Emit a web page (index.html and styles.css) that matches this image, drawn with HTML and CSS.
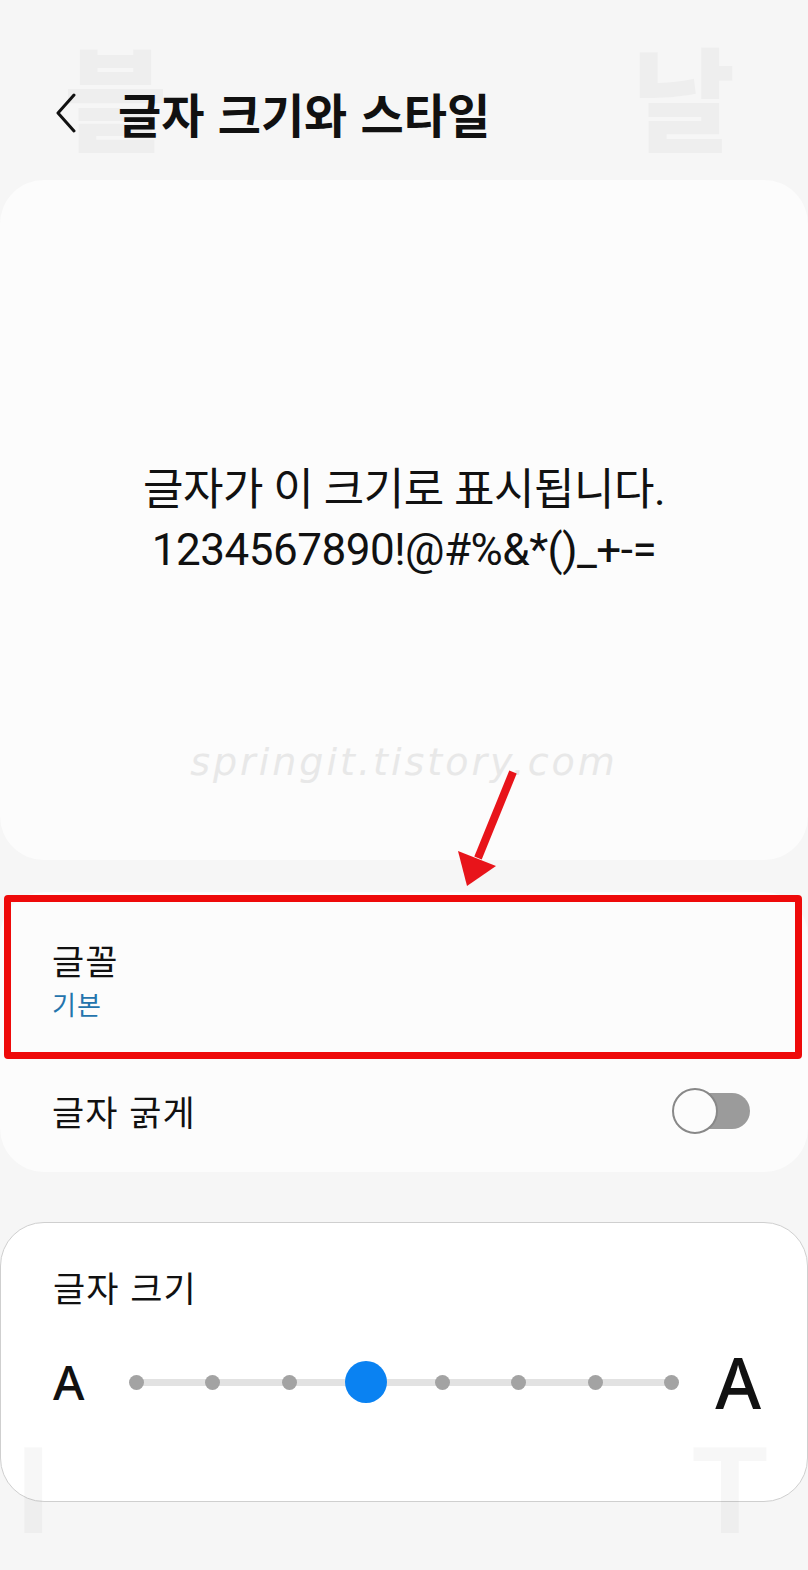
FILE: index.html
```html
<!DOCTYPE html>
<html lang="ko">
<head>
  <meta charset="UTF-8">
  <title>글자 크기와 스타일</title>
  <meta name="viewport" content="width=device-width, initial-scale=1">
  <link rel="stylesheet" href="styles.css">
</head>
<body>

<div class="ghost ghost-1">블</div>
<div class="ghost ghost-2">날</div>
<div class="ghost ghost-3">I</div>
<div class="ghost ghost-4">T</div>

<header class="topbar">
  <svg class="back" width="24" height="40" viewBox="0 0 24 40">
    <path d="M20 2 L4 20 L20 38" fill="none" stroke="#111" stroke-width="3" stroke-linecap="round" stroke-linejoin="round"/>
  </svg>
  <h1>글자 크기와 스타일</h1>
</header>

<section class="card preview">
  <p class="preview-text">글자가 이 크기로 표시됩니다.<br>1234567890!@#%&amp;*()_+-=</p>
  <div class="watermark">springit.tistory.com</div>
</section>

<svg class="arrow" width="808" height="140" viewBox="0 760 808 140">
  <line x1="513" y1="772" x2="478" y2="858" stroke="#e8141a" stroke-width="8"/>
  <polygon points="467,886 458,851 496,866" fill="#e8141a"/>
</svg>

<section class="card options">
  <div class="row font-row">
    <div class="row-title">글꼴</div>
    <div class="row-sub">기본</div>
  </div>
  <div class="row bold-row">
    <div class="row-title">글자 굵게</div>
    <div class="toggle"><span class="knob"></span></div>
  </div>
  <div class="highlight"></div>
</section>

<section class="card size">
  <div class="row-title">글자 크기</div>
  <div class="slider">
    <span class="a-small">A</span>
    <div class="track">
      <span class="dot"></span>
      <span class="dot"></span>
      <span class="dot"></span>
      <span class="dot active"></span>
      <span class="dot"></span>
      <span class="dot"></span>
      <span class="dot"></span>
      <span class="dot"></span>
    </div>
    <span class="a-big">A</span>
  </div>
</section>

</body>
</html>
```

FILE: styles.css
```css
* {
  box-sizing: border-box;
}

body {
  margin: 0;
  background: #f6f6f6;
  font-family: Roboto, "Noto Sans CJK KR", sans-serif;
  color: #111;
  position: relative;
  width: 808px;
  height: 1570px;
  overflow: hidden;
}

.ghost {
  position: absolute;
  font-family: "Noto Sans CJK KR", sans-serif;
  font-weight: 900;
  color: rgba(0, 0, 0, 0.03);
  line-height: 1;
  z-index: 3;
  pointer-events: none;
}

.ghost-1 { left: 64px; top: 38px; font-size: 112px; }
.ghost-2 { left: 632px; top: 38px; font-size: 112px; }
.ghost-3 { left: 16px; top: 1428px; font-size: 124px; font-family: "Liberation Sans", sans-serif; }
.ghost-4 { left: 692px; top: 1428px; font-size: 124px; font-family: "Liberation Sans", sans-serif; }

.topbar {
  height: 180px;
  display: flex;
  align-items: center;
  padding: 46px 0 0 54px;
  gap: 40px;
}

.topbar h1 {
  margin: 0;
  font-family: "Noto Sans CJK KR", sans-serif;
  font-size: 47px;
  line-height: 60px;
  font-weight: 700;
  letter-spacing: 0;
}

.card {
  background: #fcfcfc;
  border-radius: 44px;
  position: relative;
}

.preview {
  height: 680px;
  display: flex;
  flex-direction: column;
  align-items: center;
  padding-top: 280px;
}

.preview-text {
  margin: 0;
  text-align: center;
  font-size: 44px;
  line-height: 60px;
  font-family: Roboto, "Noto Sans CJK KR", sans-serif;
  letter-spacing: -0.5px;
}

.watermark {
  margin-top: 160px;
  font-family: "DejaVu Sans", sans-serif;
  font-style: italic;
  font-weight: 300;
  font-size: 38px;
  letter-spacing: 3px;
  color: #e8e8e8;
}

.arrow {
  position: absolute;
  left: 0;
  top: 760px;
  z-index: 4;
}

.options {
  margin-top: 32px;
  height: 280px;
}

.row {
  padding: 0 52px;
}

.font-row {
  height: 174px;
  padding-top: 44px;
}

.row-title {
  font-family: "Noto Sans CJK KR", sans-serif;
  font-size: 35px;
  line-height: 48px;
  letter-spacing: 1px;
}

.row-sub {
  font-family: "Noto Sans CJK KR", sans-serif;
  font-size: 26px;
  line-height: 40px;
  letter-spacing: 1px;
  color: #2474ad;
}

.bold-row {
  display: flex;
  align-items: center;
  justify-content: space-between;
  height: 90px;
  padding-right: 58px;
}

.toggle {
  width: 78px;
  height: 46px;
  position: relative;
}

.toggle::before {
  content: "";
  position: absolute;
  left: 24px;
  right: 0;
  top: 5px;
  bottom: 5px;
  background: #9b9b9b;
  border-radius: 0 20px 20px 0;
}

.knob {
  position: absolute;
  left: 0;
  top: 0;
  width: 46px;
  height: 46px;
  border-radius: 50%;
  background: #fcfcfc;
  border: 2.5px solid #888;
}

.highlight {
  position: absolute;
  left: 4px;
  right: 6px;
  top: 3px;
  height: 164px;
  border: 7px solid #ee0a0a;
  border-radius: 4px;
}

.size {
  margin-top: 50px;
  height: 280px;
  background: #fff;
  border: 1.5px solid #cfcfcf;
  padding: 40px 46px 0 52px;
}

.slider {
  display: flex;
  align-items: center;
  margin-top: 36px;
  height: 70px;
}

.a-small {
  font-family: "Noto Sans", sans-serif;
  font-weight: 500;
  font-size: 48px;
  width: 74px;
  line-height: 1;
}

.a-big {
  font-family: "Noto Sans", sans-serif;
  font-weight: 500;
  font-size: 70px;
  margin-left: 36px;
  line-height: 1;
}

.track {
  flex: 1;
  display: flex;
  justify-content: space-between;
  align-items: center;
  position: relative;
  height: 44px;
  margin-left: 2px;
}

.track::before {
  content: "";
  position: absolute;
  left: 7px;
  right: 7px;
  top: 19px;
  height: 7px;
  background: #e2e2e2;
}

.dot {
  width: 15px;
  height: 15px;
  border-radius: 50%;
  background: #a3a3a3;
  position: relative;
}

.dot.active {
  width: 42px;
  height: 42px;
  margin: 0 -13px;
  background: #0a82f2;
}
```
